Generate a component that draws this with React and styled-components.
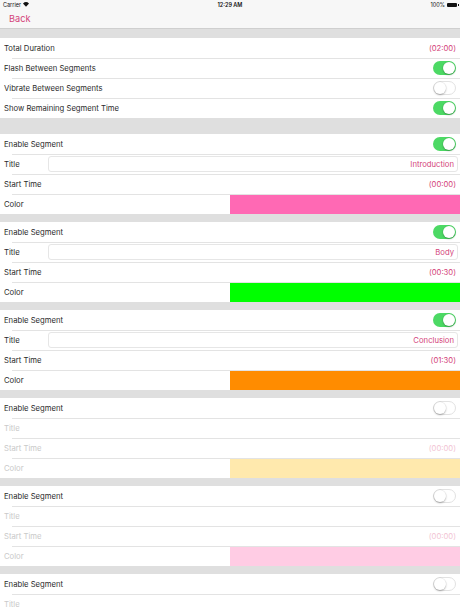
import React from 'react';
import styled, { createGlobalStyle } from 'styled-components';

const GlobalStyle = createGlobalStyle`
  html, body {
    margin: 0;
    padding: 0;
    background: #dfdfdf;
  }
  body {
    font-family: Inter, "Liberation Sans", Arial, sans-serif;
    -webkit-font-smoothing: antialiased;
  }
`;

const PINK = '#d4437a';

const Screen = styled.div`
  width: 460px;
  height: 614px;
  overflow: hidden;
  background: #dfdfdf;
`;

const StatusBar = styled.div`
  height: 9px;
  padding: 0 3px;
  display: grid;
  grid-template-columns: 1fr auto 1fr;
  align-items: center;
  background: #f7f7f7;
  font-size: 5.5px;
  color: #111;
`;

const Carrier = styled.div`
  display: flex;
  align-items: center;
  gap: 2px;
`;

const Clock = styled.div`
  font-weight: 600;
`;

const Battery = styled.div`
  display: flex;
  align-items: center;
  justify-content: flex-end;
  gap: 2px;
`;

const BatteryBody = styled.span`
  width: 10px;
  height: 4px;
  background: #111;
  border-radius: 1px;
  position: relative;
  &::after {
    content: '';
    position: absolute;
    right: -1.5px;
    top: 1px;
    width: 1px;
    height: 2px;
    background: #111;
  }
`;

const NavBar = styled.div`
  height: 20px;
  display: flex;
  align-items: center;
  padding-left: 9px;
  background: #f7f7f7;
  border-bottom: 0.5px solid #cfcfcf;
  box-sizing: border-box;
`;

const BackButton = styled.span`
  font-size: 9.2px;
  color: ${PINK};
`;

const Gap = styled.div`
  height: ${(p) => p.$h}px;
`;

const Section = styled.div`
  background: #fff;
`;

const Row = styled.div`
  position: relative;
  height: 20px;
  display: flex;
  align-items: center;
  padding-left: 4px;
  & + &::before {
    content: '';
    position: absolute;
    top: 0;
    left: 12px;
    right: 0;
    height: 0.5px;
    background: #e3e3e3;
  }
`;

const Label = styled.span`
  font-size: 7.7px;
  color: ${(p) => (p.$disabled ? '#c9c9c9' : '#2a2a2a')};
  white-space: nowrap;
  flex: 0 0 auto;
`;

const Value = styled.span`
  margin-left: auto;
  margin-right: 4px;
  font-size: 7.7px;
  color: ${(p) => (p.$disabled ? '#f2c4d4' : PINK)};
`;

const Switch = styled.span`
  margin-left: auto;
  margin-right: 4px;
  width: 23px;
  height: 14px;
  box-sizing: border-box;
  border-radius: 7px;
  position: relative;
  background: ${(p) => (p.$on ? '#4cd964' : '#fff')};
  border: ${(p) => (p.$on ? 'none' : '0.6px solid #e2e2e2')};
  &::after {
    content: '';
    position: absolute;
    top: ${(p) => (p.$on ? '1px' : '0.4px')};
    ${(p) => (p.$on ? 'right: 1px;' : 'left: 0.4px;')}
    width: 12px;
    height: 12px;
    border-radius: 50%;
    background: #fff;
    box-shadow: 0 1px 2px rgba(0, 0, 0, 0.28), 0 0 0 0.4px rgba(0, 0, 0, 0.08);
  }
`;

const TitleField = styled.span`
  margin-left: auto;
  margin-right: 2px;
  width: 410px;
  height: 16px;
  box-sizing: border-box;
  border: 0.6px solid ${(p) => (p.$disabled ? 'transparent' : '#e6e6e6')};
  border-radius: 3px;
  display: flex;
  align-items: center;
  justify-content: flex-end;
  padding-right: 3px;
  font-size: 7.7px;
  color: ${PINK};
`;

const Swatch = styled.span`
  margin-left: auto;
  align-self: stretch;
  width: 230px;
  background: ${(p) => p.$color};
`;

// the last segment runs off the bottom of the screen, only two rows show
const segments = [
  { on: true, title: 'Introduction', start: '(00:00)', color: '#ff69b4' },
  { on: true, title: 'Body', start: '(00:30)', color: '#00ff00' },
  { on: true, title: 'Conclusion', start: '(01:30)', color: '#ff8c00' },
  { on: false, title: '', start: '(00:00)', color: '#ffe9ad' },
  { on: false, title: '', start: '(00:00)', color: '#ffcce4' },
  { on: false, title: '', start: '(00:00)', color: '#ffcce4', partial: true },
];

function Wifi() {
  return (
    <svg width="6" height="5" viewBox="0 0 12 9">
      <path d="M6 9 L0 2.6 A8.6 8.6 0 0 1 12 2.6 Z" fill="#111" />
    </svg>
  );
}

function Segment({ seg }) {
  const off = !seg.on;
  return (
    <Section>
      <Row>
        <Label>Enable Segment</Label>
        <Switch $on={seg.on} />
      </Row>
      <Row>
        <Label $disabled={off}>Title</Label>
        <TitleField $disabled={off}>{seg.title}</TitleField>
      </Row>
      {!seg.partial && (
        <>
          <Row>
            <Label $disabled={off}>Start Time</Label>
            <Value $disabled={off}>{seg.start}</Value>
          </Row>
          <Row>
            <Label $disabled={off}>Color</Label>
            <Swatch $color={seg.color} />
          </Row>
        </>
      )}
    </Section>
  );
}

export default function App() {
  return (
    <Screen>
      <GlobalStyle />
      <StatusBar>
        <Carrier>Carrier <Wifi /></Carrier>
        <Clock>12:29 AM</Clock>
        <Battery>100% <BatteryBody /></Battery>
      </StatusBar>
      <NavBar>
        <BackButton>Back</BackButton>
      </NavBar>
      <Gap $h={9} />
      <Section>
        <Row>
          <Label>Total Duration</Label>
          <Value>(02:00)</Value>
        </Row>
        <Row>
          <Label>Flash Between Segments</Label>
          <Switch $on />
        </Row>
        <Row>
          <Label>Vibrate Between Segments</Label>
          <Switch />
        </Row>
        <Row>
          <Label>Show Remaining Segment Time</Label>
          <Switch $on />
        </Row>
      </Section>
      <Gap $h={16} />
      {segments.map((seg, i) => (
        <React.Fragment key={i}>
          {i > 0 && <Gap $h={8} />}
          <Segment seg={seg} />
        </React.Fragment>
      ))}
    </Screen>
  );
}
